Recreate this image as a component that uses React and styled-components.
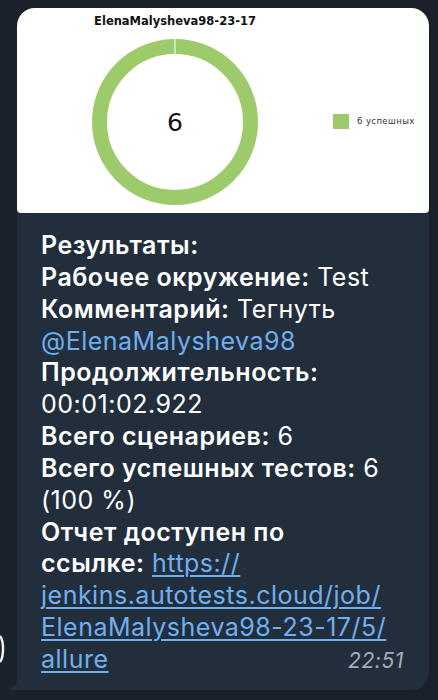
import React from "react";
import styled, { createGlobalStyle } from "styled-components";

const GlobalStyle = createGlobalStyle`
  html, body {
    margin: 0;
    padding: 0;
    background: #1b212b;
  }
  body {
    font-family: Inter, "Noto Sans", sans-serif;
    -webkit-font-smoothing: antialiased;
  }
`;

const Screen = styled.div`
  position: relative;
  width: 438px;
  height: 700px;
  box-sizing: border-box;
  padding: 8px 9px 0 17px;
  overflow: hidden;
`;

const EdgeMark = styled.svg`
  position: absolute;
  left: 0;
  top: 635px;
`;

const Bubble = styled.div`
  position: relative;
  width: 412px;
  height: 682px;
  background: #232e3d;
  border-radius: 18px 18px 18px 0;
  display: flex;
  flex-direction: column;
`;

const Tail = styled.svg`
  position: absolute;
  left: -12px;
  bottom: 0;
`;

const ChartPanel = styled.div`
  height: 205px;
  background: #fff;
  border-radius: 18px 18px 4px 4px;
  display: flex;
  padding-left: 66px;
  box-sizing: border-box;
`;

const ChartColumn = styled.div`
  width: 184px;
  display: flex;
  flex-direction: column;
  align-items: center;
`;

const ChartTitle = styled.div`
  margin-top: 6px;
  font-family: "DejaVu Sans", sans-serif;
  font-weight: bold;
  font-size: 11.5px;
  line-height: 14px;
  color: #111;
`;

const DonutBox = styled.div`
  position: relative;
  margin-top: 10px;
  width: 168px;
  height: 168px;
`;

const DonutValue = styled.div`
  position: absolute;
  inset: 0;
  display: flex;
  align-items: center;
  justify-content: center;
  font-family: "DejaVu Sans", sans-serif;
  font-size: 25px;
  color: #111;
`;

const Legend = styled.div`
  margin-left: 66px;
  margin-top: 105px;
  display: flex;
  align-items: center;
  gap: 8px;
  height: 16px;
`;

const Swatch = styled.span`
  width: 16px;
  height: 15px;
  background: #9dcb6c;
`;

const LegendText = styled.span`
  font-family: "DejaVu Sans", sans-serif;
  font-size: 8.5px;
  letter-spacing: 0.4px;
  color: #333;
`;

const Body = styled.div`
  padding: 17px 25px 0 24px;
  font-size: 25px;
  letter-spacing: 0.5px;
  line-height: 31.85px;
  color: #fff;
`;

const Line = styled.div`
  white-space: nowrap;
`;

const Label = styled.span`
  font-weight: 600;
`;

const Mention = styled.span`
  color: #6eb0ee;
`;

const Link = styled.a`
  color: #6eb0ee;
  text-decoration: underline;
  text-underline-offset: 3px;
  text-decoration-thickness: 1.5px;
`;

const LastLine = styled.div`
  display: flex;
  justify-content: space-between;
  align-items: baseline;
`;

const Time = styled.span`
  font-size: 21px;
  letter-spacing: 0.6px;
  font-style: italic;
  color: #a3adb9;
`;

export default function App() {
  const url =
    "https://jenkins.autotests.cloud/job/ElenaMalysheva98-23-17/5/allure";
  return (
    <>
      <GlobalStyle />
      <Screen>
        <EdgeMark width="6" height="28" viewBox="0 0 6 28">
          <path
            d="M0 1 C4 6 4 22 0 27"
            stroke="#f2f2f2"
            strokeWidth="2.5"
            fill="none"
          />
        </EdgeMark>
        <Bubble>
          <Tail width="14" height="12" viewBox="0 0 14 12">
            <path d="M12 0 C12 6 9 10 0 12 L14 12 L14 0 Z" fill="#232e3d" />
          </Tail>
          <ChartPanel>
            <ChartColumn>
              <ChartTitle>ElenaMalysheva98-23-17</ChartTitle>
              <DonutBox>
                <svg width="168" height="168" viewBox="0 0 168 168">
                  <circle
                    cx="84"
                    cy="84"
                    r="75.5"
                    fill="none"
                    stroke="#9dcb6c"
                    strokeWidth="15"
                  />
                  <line
                    x1="84"
                    y1="1"
                    x2="84"
                    y2="16"
                    stroke="#ffffff"
                    strokeWidth="1"
                  />
                </svg>
                <DonutValue>6</DonutValue>
              </DonutBox>
            </ChartColumn>
            <Legend>
              <Swatch />
              <LegendText>6 успешных</LegendText>
            </Legend>
          </ChartPanel>
          <Body>
            <Line>
              <Label>Результаты:</Label>
            </Line>
            <Line>
              <Label>Рабочее окружение:</Label> Test
            </Line>
            <Line>
              <Label>Комментарий:</Label> Тегнуть
            </Line>
            <Line>
              <Mention>@ElenaMalysheva98</Mention>
            </Line>
            <Line>
              <Label>Продолжительность:</Label>
            </Line>
            <Line>00:01:02.922</Line>
            <Line>
              <Label>Всего сценариев:</Label> 6
            </Line>
            <Line>
              <Label>Всего успешных тестов:</Label> 6
            </Line>
            <Line>(100 %)</Line>
            <Line>
              <Label>Отчет доступен по</Label>
            </Line>
            <Line>
              <Label>ссылке:</Label> <Link href={url}>https://</Link>
            </Line>
            <Line>
              <Link href={url}>jenkins.autotests.cloud/job/</Link>
            </Line>
            <Line>
              <Link href={url}>ElenaMalysheva98-23-17/5/</Link>
            </Line>
            <LastLine>
              <Link href={url}>allure</Link>
              <Time>22:51</Time>
            </LastLine>
          </Body>
        </Bubble>
      </Screen>
    </>
  );
}
